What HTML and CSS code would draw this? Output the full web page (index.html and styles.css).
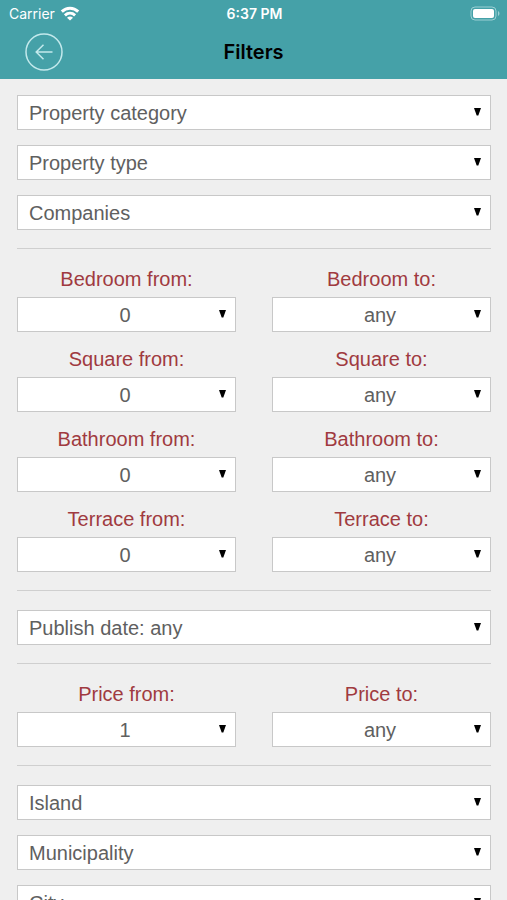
FILE: index.html
```html
<!DOCTYPE html>
<html lang="en">
<head>
  <meta charset="UTF-8" />
  <meta name="viewport" content="width=device-width, initial-scale=1" />
  <title>Filters</title>
  <link rel="stylesheet" href="styles.css">
</head>
<body>
  <header class="header">
    <div class="status">
      <div class="carrier">
        <span>Carrier</span>
        <svg width="20" height="15" viewBox="0 0 20 15" fill="none" stroke="#fff" stroke-width="3">
          <path d="M1.800 5.600C6.500 1.100 13.500 1.100 18.200 5.600" />
          <path d="M4.900 9.300C8 6.500 12 6.500 15.100 9.300" />
          <path d="M10 14.500 7 11.700C8.700 10.200 11.300 10.200 13 11.700Z" fill="#fff" stroke="none" />
        </svg>
      </div>
      <div class="time">6:37 PM</div>
      <div class="battery">
        <svg width="30" height="15" viewBox="0 0 30 15">
          <rect x="1" y="1" width="25" height="13" rx="4" fill="none" stroke="#9bd0d4" />
          <rect x="3" y="3" width="21" height="9" rx="2" fill="#fff" />
          <path d="M28 5c2 1 2 4 0 5z" fill="#9bd0d4" />
        </svg>
      </div>
    </div>
    <div class="navbar">
      <button class="back" type="button" aria-label="Back">
        <svg width="38" height="38" viewBox="0 0 38 38" fill="none" stroke="#c3e9ec" stroke-width="1.500">
          <circle cx="19" cy="19" r="18" />
          <path d="M27.500 19H11.200M18.500 11.700 11.200 19l7.300 7.300" />
        </svg>
      </button>
      <h1>Filters</h1>
    </div>
  </header>

  <main class="filters">
    <section class="group">
      <select aria-label="Property category"><option>Property category</option></select>
      <select aria-label="Property type"><option>Property type</option></select>
      <select aria-label="Companies"><option>Companies</option></select>
    </section>

    <section class="group ranges">
      <div class="field">
        <label for="bedroomFrom">Bedroom from:</label>
        <select id="bedroomFrom"><option>0</option></select>
      </div>
      <div class="field">
        <label for="bedroomTo">Bedroom to:</label>
        <select id="bedroomTo"><option>any</option></select>
      </div>
      <div class="field">
        <label for="squareFrom">Square from:</label>
        <select id="squareFrom"><option>0</option></select>
      </div>
      <div class="field">
        <label for="squareTo">Square to:</label>
        <select id="squareTo"><option>any</option></select>
      </div>
      <div class="field">
        <label for="bathroomFrom">Bathroom from:</label>
        <select id="bathroomFrom"><option>0</option></select>
      </div>
      <div class="field">
        <label for="bathroomTo">Bathroom to:</label>
        <select id="bathroomTo"><option>any</option></select>
      </div>
      <div class="field">
        <label for="terraceFrom">Terrace from:</label>
        <select id="terraceFrom"><option>0</option></select>
      </div>
      <div class="field">
        <label for="terraceTo">Terrace to:</label>
        <select id="terraceTo"><option>any</option></select>
      </div>
    </section>

    <section class="group">
      <select aria-label="Publish date"><option>Publish date: any</option></select>
    </section>

    <section class="group ranges">
      <div class="field">
        <label for="priceFrom">Price from:</label>
        <select id="priceFrom"><option>1</option></select>
      </div>
      <div class="field">
        <label for="priceTo">Price to:</label>
        <select id="priceTo"><option>any</option></select>
      </div>
    </section>

    <section class="group">
      <select aria-label="Island"><option>Island</option></select>
      <select aria-label="Municipality"><option>Municipality</option></select>
      <select aria-label="City"><option>City</option></select>
    </section>
  </main>
</body>
</html>
```
FILE: styles.css
```css
* {
  box-sizing: border-box;
}

body {
  margin: 0;
  height: 100vh;
  display: flex;
  flex-direction: column;
  background-color: #efefef;
  font-family: "Liberation Sans", Arial, sans-serif;
}

.header {
  flex: none;
  padding-bottom: 2px;
  background-color: #45a1a8;
  font-family: Inter, sans-serif;
}

.status {
  display: grid;
  grid-template-columns: 1fr auto 1fr;
  align-items: center;
  height: 27px;
  padding: 0 7px 0 9px;
  color: #fff;
  font-size: 14px;
}

.carrier {
  display: flex;
  align-items: center;
  gap: 5px;
}

.time {
  font-weight: 600;
}

.battery {
  display: flex;
  justify-content: flex-end;
}

.navbar {
  display: grid;
  grid-template-columns: 1fr auto 1fr;
  align-items: center;
  height: 50px;
  padding: 0 25px;
}

.navbar h1 {
  margin: 0;
  font-size: 20px;
  font-weight: 600;
  color: #000;
}

.back {
  width: 38px;
  height: 38px;
  padding: 0;
  border: none;
  background: none;
  cursor: pointer;
}

.back svg {
  display: block;
}

.filters {
  flex: 1;
  min-height: 0;
  overflow-y: auto;
  scrollbar-width: none;
  padding: 0 16px 0 17px;
}

.group {
  display: grid;
  gap: 15px;
  padding: 19px 0 18px;
  border-bottom: 1px solid #cfcfcf;
}

.group:first-child {
  padding-top: 16px;
}

.group:last-child {
  border-bottom: none;
}

.ranges {
  grid-template-columns: 1fr 1fr;
  gap: 16px 36px;
}

.field {
  display: flex;
  flex-direction: column;
  gap: 7px;
}

label {
  font-size: 20px;
  line-height: 22px;
  text-align: center;
  color: #a03a40;
}

select {
  appearance: none;
  width: 100%;
  height: 35px;
  margin: 0;
  padding: 1px 24px 0 11px;
  border: 1px solid #c8c8c8;
  border-radius: 0;
  background: #fff url("data:image/svg+xml,%3Csvg xmlns='http://www.w3.org/2000/svg' width='7' height='8'%3E%3Cpath d='M0 0h7L4.300 7.500h-1.600z'/%3E%3C/svg%3E") no-repeat right 9px top 12px;
  color: #606060;
  font-family: inherit;
  font-size: 20px;
}

.ranges select {
  padding: 1px 14px 0 11px;
  text-align: center;
  text-align-last: center;
}
```
